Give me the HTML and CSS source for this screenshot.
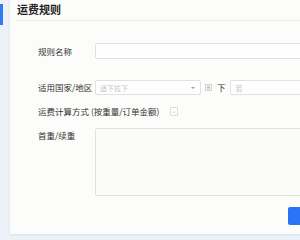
FILE: index.html
```html
<!DOCTYPE html>
<html lang="zh">
<head>
<meta charset="utf-8">
<link rel="stylesheet" href="styles.css">
</head>
<body>
<div class="page">
  <aside class="side"><div class="side-bar"></div></aside>
  <main class="card">
    <header class="card-head"><h1 class="title">运费规则</h1></header>
    <div class="form">
      <div class="row row-name">
        <label class="label">规则名称</label>
        <div class="input"></div>
      </div>
      <div class="row row-region">
        <label class="label">适用国家/地区</label>
        <div class="select"><span class="ph">适下拉下</span><span class="caret"></span></div>
        <span class="list-icon"><svg width="7" height="7" viewBox="0 0 7 7"><rect x="0.5" y="0.5" width="6" height="6" fill="none" stroke="#c9c9c9" stroke-width="0.8"/><path d="M1.8 2.2H5.2M1.8 3.5H5.2M1.8 4.8H5.2" stroke="#aaa" stroke-width="0.7"/></svg></span>
        <span class="under">下</span>
        <div class="input small"><span class="ph">若</span></div>
      </div>
      <div class="row row-calc">
        <label class="label wide">运费计算方式 (按重量/订单金额)</label>
        <span class="check"><svg width="8" height="8" viewBox="0 0 8 8"><path d="M2.2 3.4L4 5.2L5.8 3.4" fill="none" stroke="#b5b5b5" stroke-width="0.8"/></svg></span>
      </div>
      <div class="row row-weight">
        <label class="label">首重/续重</label>
        <div class="textarea"></div>
      </div>
      <div class="foot">
        <button class="btn"></button>
      </div>
    </div>
  </main>
</div>
</body>
</html>
```
FILE: styles.css
```css
* { box-sizing: border-box; margin: 0; padding: 0; }
html, body { width: 300px; height: 240px; overflow: hidden; }
body {
  background: #edf2f9;
  font-family: "Noto Sans CJK SC", "Noto Sans", sans-serif;
  color: #333;
}
.page { display: flex; width: 340px; height: 234px; }
.side { width: 10px; flex: none; padding-top: 4px; }
.side-bar { width: 3px; height: 21px; background: #2f7bf0; }
.card {
  width: 330px;
  height: 234px;
  background: #fcfcfa;
  box-shadow: 0 1px 2px rgba(150, 165, 190, 0.25);
  padding-left: 7px;
}
.card-head {
  height: 21px;
  border-bottom: 1px solid #ececea;
  display: flex;
  align-items: center;
  padding-bottom: 2px;
}
.title { font-size: 11px; font-weight: 700; color: #1f1f1f; line-height: 14px; }
.form { padding: 22px 0 0 21px; }
.row { display: flex; align-items: center; }
.label { width: 57px; flex: none; font-size: 8.5px; line-height: 15px; color: #333; white-space: nowrap; }
.label.wide { width: auto; margin-right: 11px; }
.input {
  flex: 1;
  height: 16px;
  border: 1px solid #e1e1df;
  border-radius: 2px;
  background: #fefefe;
  display: flex;
  align-items: center;
  padding-left: 4px;
}
.ph { font-size: 7px; color: #c4c4c4; line-height: 10px; }
.row-region { margin-top: 21px; }
.select {
  width: 106px;
  height: 15px;
  border: 1px solid #e1e1df;
  border-radius: 2px;
  background: #fefefe;
  display: flex;
  align-items: center;
  justify-content: space-between;
  padding: 0 5px 0 4px;
}
.caret {
  width: 0; height: 0;
  border-left: 2px solid transparent;
  border-right: 2px solid transparent;
  border-top: 2.5px solid #9a9a9a;
}
.list-icon { margin-left: 4px; display: flex; }
.under { margin-left: 5px; font-size: 8.5px; color: #333; line-height: 15px; }
.input.small { height: 15px; margin-left: 4px; padding-left: 5px; }
.row-calc { margin-top: 9px; height: 15px; }
.check {
  width: 8px; height: 9px;
  border: 1px solid #dcdcdc;
  border-radius: 1px;
  background: #fff;
  display: flex; align-items: center; justify-content: center;
}
.row-weight { margin-top: 9px; align-items: flex-start; }
.textarea {
  flex: 1;
  height: 68px;
  border: 1px solid #e1e1df;
  border-radius: 2px;
  background: #fbfbf9;
}
.foot { display: flex; justify-content: flex-end; margin-top: 11px; padding-right: 12px; }
.btn {
  width: 40px; height: 18px;
  border: none;
  border-radius: 2px;
  background: #2a72f6;
}
```
